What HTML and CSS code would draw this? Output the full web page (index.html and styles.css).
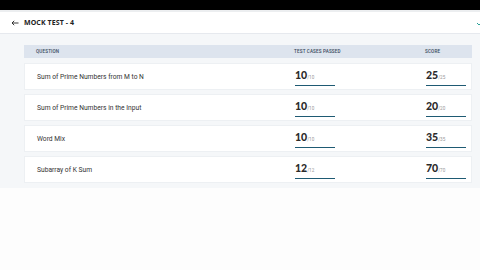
FILE: index.html
```html
<!DOCTYPE html>
<html>
<head>
<meta charset="utf-8">
<link rel="stylesheet" href="styles.css">
</head>
<body>
<div class="topbar"></div>
<header class="header">
  <div class="title">
    <svg class="back" width="8" height="6" viewBox="0 0 8 6"><path d="M7.5 3H1M3.2 0.8L1 3l2.2 2.2" fill="none" stroke="#222" stroke-width="0.9"/></svg>
    <span>MOCK TEST - 4</span>
  </div>
  <svg class="check" width="8" height="6" viewBox="0 0 8 6"><path d="M1 3l2 2 4-4" fill="none" stroke="#2aa198" stroke-width="1"/></svg>
</header>
<main class="main">
  <div class="table">
    <div class="thead">
      <div class="c-q">QUESTION</div>
      <div class="c-t">TEST CASES PASSED</div>
      <div class="c-s">SCORE</div>
    </div>
    <div class="row">
      <div class="c-q">Sum of Prime Numbers from M to N</div>
      <div class="c-t"><div class="val"><b>10</b><small>/10</small></div><div class="bar"></div></div>
      <div class="c-s"><div class="val"><b>25</b><small>/25</small></div><div class="bar"></div></div>
    </div>
    <div class="row">
      <div class="c-q">Sum of Prime Numbers in the Input</div>
      <div class="c-t"><div class="val"><b>10</b><small>/10</small></div><div class="bar"></div></div>
      <div class="c-s"><div class="val"><b>20</b><small>/20</small></div><div class="bar"></div></div>
    </div>
    <div class="row">
      <div class="c-q">Word Mix</div>
      <div class="c-t"><div class="val"><b>10</b><small>/10</small></div><div class="bar"></div></div>
      <div class="c-s"><div class="val"><b>35</b><small>/35</small></div><div class="bar"></div></div>
    </div>
    <div class="row">
      <div class="c-q">Subarray of K Sum</div>
      <div class="c-t"><div class="val"><b>12</b><small>/12</small></div><div class="bar"></div></div>
      <div class="c-s"><div class="val"><b>70</b><small>/70</small></div><div class="bar"></div></div>
    </div>
  </div>
</main>
</body>
</html>
```

FILE: styles.css
```css
html, body {
  margin: 0;
  padding: 0;
  background: #fdfdfd;
  font-family: "Open Sans", "Liberation Sans", sans-serif;
  color: #333;
}
.topbar {
  height: 10px;
  background: #000;
  border-bottom: 2px solid #eceef0;
}
.header {
  height: 21px;
  background: #fff;
  border-bottom: 1px solid #e6e9ee;
  display: flex;
  align-items: center;
  justify-content: space-between;
  padding-left: 11px;
}
.title {
  display: flex;
  align-items: center;
  gap: 5px;
  font-size: 7px;
  font-weight: 700;
  color: #222;
  letter-spacing: 0.1px;
}
.back { margin-top: 1px; }
.check { margin-right: -4px; }
.main {
  background: #f5f7f9;
  padding: 11px 8px 5px 24px;
}
.table {
  display: flex;
  flex-direction: column;
  gap: 4px;
}
.thead, .row {
  box-sizing: border-box;
  display: grid;
  grid-template-columns: 258px 131px 1fr;
  align-items: center;
  padding-left: 12px;
}
.thead {
  height: 13px;
  background: #dde4ee;
  font-family: Roboto, "Liberation Sans", sans-serif;
  font-size: 4.6px;
  font-weight: 500;
  color: #3a4a5c;
  letter-spacing: 0.15px;
  margin-bottom: 1px;
}
.row {
  height: 27px;
  background: #fff;
  border: 1px solid #edf0f3;
  font-family: Roboto, "Liberation Sans", sans-serif;
  font-size: 6.7px;
  color: #333;
}
.val {
  line-height: 10px;
  margin-top: 3px;
}
.val b {
  font-family: Lato, "Liberation Sans", sans-serif;
  font-size: 10.5px;
  font-weight: 900;
  color: #2b2b2b;
}
.val small {
  font-family: Roboto, sans-serif;
  font-size: 4.6px;
  color: #999;
}
.bar {
  width: 40px;
  height: 1.5px;
  background: #1e5a73;
  margin-top: 2px;
}
```
